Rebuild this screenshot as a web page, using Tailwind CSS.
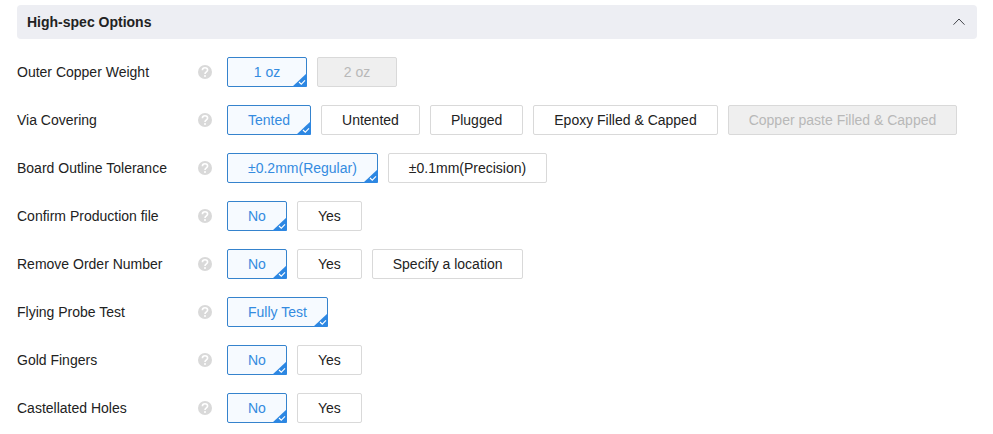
<!DOCTYPE html>
<html lang="en">
<head>
<meta charset="utf-8">
<meta name="viewport" content="width=device-width, initial-scale=1">
<title>High-spec Options</title>
<script src="https://cdn.jsdelivr.net/npm/@tailwindcss/browser@4"></script>
</head>
<body class="bg-white font-['Liberation_Sans',Arial,sans-serif] text-sm text-[#222]">
<main class="flex flex-col gap-[18px] pt-[5px] pr-4 pb-3 pl-[17px]">
  <h2>
    <button type="button" aria-expanded="true" aria-controls="options" class="flex h-[34px] w-full items-center justify-between rounded bg-[#edeef3] px-[10px] font-bold">
      High-spec Options
      <svg class="h-4 w-4" viewBox="0 0 16 16" fill="none" stroke="#44464c" aria-hidden="true"><path d="M2.500 10.700 8 5l5.500 5.700"/></svg>
    </button>
  </h2>
  <form id="options" class="flex flex-col gap-[18px]"></form>
</main>

<script>
  const rows = [
    { label: 'Outer Copper Weight', options: ['1 oz', '2 oz'], disabled: ['2 oz'] },
    { label: 'Via Covering', options: ['Tented', 'Untented', 'Plugged', 'Epoxy Filled &amp; Capped', 'Copper paste Filled &amp; Capped'], disabled: ['Copper paste Filled &amp; Capped'] },
    { label: 'Board Outline Tolerance', options: ['±0.2mm(Regular)', '±0.1mm(Precision)'] },
    { label: 'Confirm Production file', options: ['No', 'Yes'] },
    { label: 'Remove Order Number', options: ['No', 'Yes', 'Specify a location'] },
    { label: 'Flying Probe Test', options: ['Fully Test'] },
    { label: 'Gold Fingers', options: ['No', 'Yes'] },
    { label: 'Castellated Holes', options: ['No', 'Yes'] },
  ];

  const helpIcon = `
    <svg class="h-[14px] w-[14px]" viewBox="0 0 14 14" fill="none" aria-hidden="true">
      <circle cx="7" cy="7" r="7" fill="#d9d9d9"/>
      <path d="M4.400 5.300C4.400 3.700 5.500 2.800 7 2.800s2.600.9 2.600 2.300c0 1.700-2.600 1.800-2.600 3.900" stroke="#fff" stroke-width="1.600"/>
      <circle cx="7" cy="10.900" r="1" fill="#fff"/>
    </svg>`;

  // Corner flag shown on the chosen option
  const cornerCheck = `
    <svg class="absolute -right-px -bottom-px hidden h-[14px] w-[15px] peer-checked:block" viewBox="0 0 15 14" fill="none" aria-hidden="true">
      <path d="M15 0v13a1 1 0 0 1-1 1H0z" fill="#2d87e2"/>
      <path d="m7 9 2.300 2.200L13 7.300" stroke="#fff" stroke-width="1.100"/>
    </svg>`;

  const optionClass = 'relative flex h-[30px] items-center justify-center rounded-[2px] border border-[#d9d9d9] px-5 whitespace-nowrap cursor-pointer has-checked:border-[#3583cd] has-checked:bg-[#f6faff] has-checked:text-[#348be0] has-disabled:cursor-not-allowed has-disabled:bg-[#efefef] has-disabled:text-[#b8b8b8] has-focus-visible:ring-2';

  document.getElementById('options').innerHTML = rows.map((row, r) => `
    <div class="flex items-center" role="radiogroup" aria-labelledby="row-${r}">
      <div class="flex w-[195px] shrink-0 items-center justify-between">
        <span id="row-${r}">${row.label}</span>
        <button type="button" aria-label="About ${row.label}" class="cursor-help">${helpIcon}</button>
      </div>
      <div class="ml-[15px] flex flex-wrap gap-[10px]">
        ${row.options.map((text, i) => `
          <label class="${optionClass} ${r === 0 ? 'min-w-20' : ''}">
            <input type="radio" name="row-${r}" class="peer sr-only" ${i === 0 ? 'checked' : ''} ${row.disabled?.includes(text) ? 'disabled' : ''}>
            ${text}
            ${cornerCheck}
          </label>`).join('')}
      </div>
    </div>`).join('');
</script>
</body>
</html>
